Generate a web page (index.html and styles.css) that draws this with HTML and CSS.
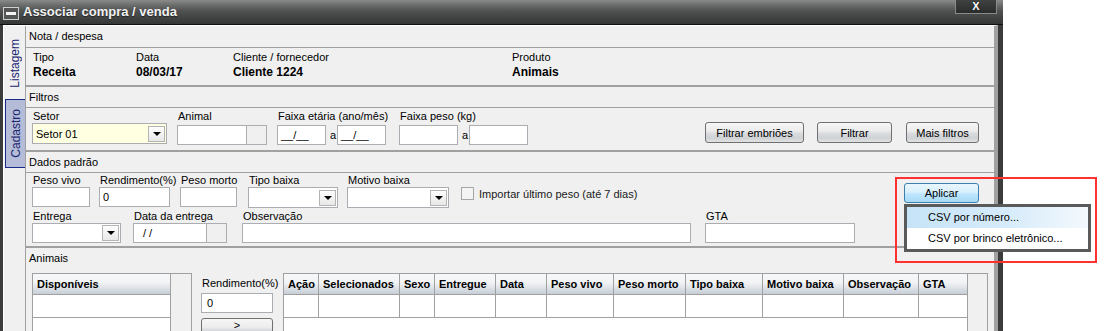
FILE: index.html
```html
<!DOCTYPE html>
<html lang="pt-BR">
<head>
    <meta charset="UTF-8">
    <title>Associar compra / venda</title>
    <link rel="stylesheet" href="styles.css">
</head>
<body>
    <div class="window">
        <div class="titlebar">
            <span class="sys-btn"><span></span></span>
            <span class="title">Associar compra / venda</span>
            <span class="close-btn">X</span>
        </div>
        <div class="frame">
            <div class="tabs">
                <div class="tab"><span>Listagem</span></div>
                <div class="tab active"><span>Cadastro</span></div>
            </div>
            <div class="main">
                <div class="sec-head first">Nota / despesa</div>
                <div class="sec-body nota">
                    <div class="info col-tipo"><div>Tipo</div><b>Receita</b></div>
                    <div class="info col-data"><div>Data</div><b>08/03/17</b></div>
                    <div class="info col-cliente"><div>Cliente / fornecedor</div><b>Cliente 1224</b></div>
                    <div class="info"><div>Produto</div><b>Animais</b></div>
                </div>

                <div class="sec-head">Filtros</div>
                <div class="sec-body filtros">
                    <div class="field w-135">
                        <div class="lbl">Setor</div>
                        <div class="sel yellow"><span>Setor 01</span><span class="dd"></span></div>
                    </div>
                    <div class="field ml-10">
                        <div class="lbl">Animal</div>
                        <div class="pair"><div class="inp w-70"></div><div class="inp off w-20"></div></div>
                    </div>
                    <div class="field ml-10">
                        <div class="lbl">Faixa etária (ano/mês)</div>
                        <div class="pair"><div class="inp w-49">__/__</div><span class="sep">a</span><div class="inp w-49">__/__</div></div>
                    </div>
                    <div class="field ml-11">
                        <div class="lbl">Faixa peso (kg)</div>
                        <div class="pair"><div class="inp w-59"></div><span class="sep">a</span><div class="inp w-59"></div></div>
                    </div>
                    <div class="filter-btns">
                        <div class="btn w-99">Filtrar embriões</div>
                        <div class="btn w-75">Filtrar</div>
                        <div class="btn w-73">Mais filtros</div>
                    </div>
                </div>

                <div class="sec-head">Dados padrão</div>
                <div class="sec-body dados">
                    <div class="row">
                        <div class="field w-58">
                            <div class="lbl">Peso vivo</div>
                            <div class="inp"></div>
                        </div>
                        <div class="field w-71 ml-9">
                            <div class="lbl">Rendimento(%)</div>
                            <div class="inp">0</div>
                        </div>
                        <div class="field w-57 ml-10">
                            <div class="lbl">Peso morto</div>
                            <div class="inp"></div>
                        </div>
                        <div class="field w-90 ml-11">
                            <div class="lbl">Tipo baixa</div>
                            <div class="sel"><span></span><span class="dd"></span></div>
                        </div>
                        <div class="field w-102 ml-9">
                            <div class="lbl">Motivo baixa</div>
                            <div class="sel"><span></span><span class="dd"></span></div>
                        </div>
                        <div class="check">
                            <span class="box"></span>
                            <span>Importar último peso (até 7 dias)</span>
                        </div>
                        <div class="aplicar-wrap">
                            <div class="btn aplicar">Aplicar</div>
                            <div class="menu">
                                <div class="menu-item hot">CSV por número...</div>
                                <div class="menu-item">CSV por brinco eletrônico...</div>
                            </div>
                            <div class="mark"></div>
                        </div>
                    </div>
                    <div class="row row2">
                        <div class="field w-89">
                            <div class="lbl">Entrega</div>
                            <div class="sel short"><span></span><span class="dd"></span></div>
                        </div>
                        <div class="field ml-12">
                            <div class="lbl">Data da entrega</div>
                            <div class="pair"><div class="inp w-74 date">/ /</div><div class="inp off w-20"></div></div>
                        </div>
                        <div class="field w-449 ml-15">
                            <div class="lbl">Observação</div>
                            <div class="inp"></div>
                        </div>
                        <div class="field w-150 ml-14">
                            <div class="lbl">GTA</div>
                            <div class="inp"></div>
                        </div>
                    </div>
                </div>

                <div class="sec-head plain">Animais</div>
                <div class="animais">
                    <div class="list">
                        <div class="list-main">
                            <div class="gh">Disponíveis</div>
                            <div class="gc"></div>
                        </div>
                        <div class="vscroll"></div>
                    </div>
                    <div class="rend">
                        <div class="lbl">Rendimento(%)</div>
                        <div class="inp">0</div>
                        <div class="btn move">&gt;</div>
                    </div>
                    <div class="grid-wrap">
                        <div class="grid">
                            <div class="gh">Ação</div>
                            <div class="gh">Selecionados</div>
                            <div class="gh">Sexo</div>
                            <div class="gh">Entregue</div>
                            <div class="gh">Data</div>
                            <div class="gh">Peso vivo</div>
                            <div class="gh">Peso morto</div>
                            <div class="gh">Tipo baixa</div>
                            <div class="gh">Motivo baixa</div>
                            <div class="gh">Observação</div>
                            <div class="gh">GTA</div>
                            <div class="gc"></div>
                            <div class="gc"></div>
                            <div class="gc"></div>
                            <div class="gc"></div>
                            <div class="gc"></div>
                            <div class="gc"></div>
                            <div class="gc"></div>
                            <div class="gc"></div>
                            <div class="gc"></div>
                            <div class="gc"></div>
                            <div class="gc"></div>
                        </div>
                        <div class="vscroll"></div>
                    </div>
                </div>
            </div>
        </div>
    </div>
</body>
</html>
```

FILE: styles.css
```css
* {
    box-sizing: border-box;
}
html, body {
    margin: 0;
    height: 100%;
    overflow: hidden;
}
body {
    background: #fff;
    font-family: "Liberation Sans", Arial, sans-serif;
    font-size: 11px;
    color: #000;
}

/* janela */
.window {
    width: 1003px;
    height: 331px;
    background: #3a3c3c;
    display: flex;
    flex-direction: column;
}
.titlebar {
    height: 25px;
    flex: none;
    display: flex;
    align-items: flex-start;
    border-bottom: 1px solid #101010;
    background: linear-gradient(#8a8a8a 0%, #6a6c6c 22%, #505252 45%, #434545 70%, #353737 100%);
}
.sys-btn {
    margin: 7px 0 0 3px;
    width: 16px;
    height: 13px;
    border: 1px solid #cfcfcf;
    background: #555;
    display: flex;
    align-items: center;
    justify-content: center;
}
.sys-btn span {
    width: 10px;
    height: 3px;
    background: #f4f4f4;
}
.title {
    margin: 4px 0 0 4px;
    font-size: 13px;
    line-height: 16px;
    font-weight: bold;
    color: #f2f2f2;
    text-shadow: 0 1px 1px #222;
}
.close-btn {
    margin: -1px 6px 0 auto;
    width: 42px;
    height: 15px;
    border: 1px solid #8a8a8a;
    background: linear-gradient(#404242, #2a2c2c);
    color: #fff;
    font-size: 11px;
    font-weight: bold;
    line-height: 13px;
    text-align: center;
    text-shadow: 0 0 1px #000;
}
.frame {
    flex: 1;
    min-height: 0;
    display: flex;
    margin: 0 5px 0 3px;
    border-top: 1px solid #fff;
    border-left: 1px solid #fff;
    border-right: 4px solid #a0a0a0;
    background: #f0f0f0;
}

/* abas verticais */
.tabs {
    width: 22px;
    flex: none;
    border-right: 1px solid #a0a0a0;
    padding-top: 2px;
}
.tab {
    height: 70px;
    display: flex;
    align-items: center;
    justify-content: center;
    font-size: 12px;
    color: #1a2670;
}
.tab span {
    writing-mode: vertical-rl;
    transform: rotate(180deg);
}
.tab.active {
    height: 69px;
    margin: 1px 0 0 1px;
    background: #b4bcd8;
    border: 1px solid #1a2a8a;
    border-right: none;
}

/* conteudo */
.main {
    width: 968px;
    flex: none;
    display: flex;
    flex-direction: column;
}
.sec-head {
    height: 21px;
    line-height: 20px;
    padding-left: 3px;
    border-bottom: 1px solid #a0a0a0;
    flex: none;
}
.sec-head.first {
    height: 22px;
    line-height: 21px;
}
.sec-head.plain {
    height: 20px;
    border-bottom: none;
}
.sec-body {
    flex: none;
    border-bottom: 2px solid #a0a0a0;
    padding-left: 6px;
}
.nota {
    height: 39px;
    padding-top: 2px;
    display: flex;
}
.info {
    padding-left: 1px;
    line-height: 15px;
}
.info b {
    display: block;
    font-size: 12px;
}
.col-tipo { width: 103px; }
.col-data { width: 97px; }
.col-cliente { width: 279px; }

.filtros {
    height: 44px;
    padding: 2px 15px 0 6px;
    display: flex;
    align-items: flex-start;
}
.dados {
    height: 75px;
    padding: 1px 15px 0 6px;
}
.row {
    display: flex;
    align-items: flex-start;
}
.row2 {
    margin-top: 2px;
}

.field {
    display: flex;
    flex-direction: column;
}
.lbl {
    height: 13px;
    line-height: 13px;
    padding-left: 1px;
    white-space: nowrap;
}
.pair {
    display: flex;
}
.inp {
    height: 20px;
    border: 1px solid #abadb3;
    background: #fff;
    padding-left: 3px;
    line-height: 18px;
    white-space: nowrap;
}
.filtros .inp {
    margin-top: 2px;
}
.inp.off {
    background: #f0f0f0;
    border-left: none;
}
.inp.date {
    padding-left: 9px;
}
.sep {
    width: 11px;
    margin-top: 2px;
    padding-left: 4px;
    line-height: 20px;
}
.sel {
    height: 21px;
    border: 1px solid #abadb3;
    background: #fff;
    display: flex;
    align-items: center;
    padding: 0 1px 0 3px;
}
.sel.short {
    height: 20px;
}
.sel.yellow {
    background: #ffffe1;
}
.sel span:first-child {
    flex: 1;
}
.dd {
    width: 17px;
    height: 16px;
    border: 1px solid #b4b4b4;
    background: linear-gradient(#fdfdfd, #e8e8e8);
    display: flex;
    align-items: center;
    justify-content: center;
}
.dd::after {
    content: "";
    border-left: 4px solid transparent;
    border-right: 4px solid transparent;
    border-top: 4px solid #000;
}

.btn {
    height: 21px;
    border: 1px solid #707070;
    border-radius: 3px;
    background: linear-gradient(#f6f6f6 0%, #ececec 42%, #d9dbde 55%, #cfd2d5 80%, #e2e2e2 100%);
    display: flex;
    align-items: center;
    justify-content: center;
    white-space: nowrap;
}
.filter-btns {
    margin: 12px 0 0 auto;
    display: flex;
    gap: 13px;
}
.filter-btns .btn:last-child {
    margin-left: 1px;
}

.check {
    margin: 13px 0 0 12px;
    display: flex;
    align-items: center;
    gap: 5px;
    color: #1a1a1a;
}
.check .box {
    width: 13px;
    height: 13px;
    border: 1px solid #a6a6a6;
    background: #f4f4f4;
}

.aplicar-wrap {
    position: relative;
    margin: 9px 0 0 auto;
}
.btn.aplicar {
    width: 75px;
    height: 20px;
    border-color: #3c7fb1;
    background: linear-gradient(#eaf6fd 0%, #d9f0fc 45%, #bee6fd 55%, #a7d9f5 100%);
}
.menu {
    position: absolute;
    left: 0;
    top: 21px;
    width: 187px;
    border: 3px solid #5a5a5a;
    background: #fff;
    z-index: 2;
}
.menu-item {
    height: 21px;
    line-height: 21px;
    padding-left: 21px;
    white-space: nowrap;
}
.menu-item.hot {
    background: linear-gradient(to right, #c6e3f7 0%, #d6ebfa 55%, #f4f9fd 100%);
}
.mark {
    position: absolute;
    left: -9px;
    top: -6px;
    width: 202px;
    height: 86px;
    border: 2px solid #ff3030;
    z-index: 3;
}

/* animais */
.animais {
    padding: 5px 6px 0;
    display: flex;
    align-items: flex-start;
}
.list {
    width: 160px;
    height: 70px;
    display: flex;
    border: 1px solid #a0a0a0;
    background: #fff;
}
.list-main {
    flex: 1;
    border-right: 1px solid #a0a0a0;
}
.vscroll {
    width: 20px;
    background: #f0f0f0;
}
.gh {
    height: 21px;
    line-height: 20px;
    padding-left: 4px;
    border-bottom: 1px solid #a0a0a0;
    font-weight: bold;
    white-space: nowrap;
    overflow: hidden;
    background: linear-gradient(#f7f8f9 0%, #f3f4f6 40%, #e2e6ea 65%, #c6cdd6 100%);
}
.gc {
    height: 23px;
    border-bottom: 1px solid #a0a0a0;
    background: #fff;
}
.rend {
    width: 72px;
    margin-left: 9px;
    padding-top: 3px;
}
.rend .lbl {
    height: 14px;
    line-height: 14px;
}
.rend .inp {
    margin-top: 3px;
    padding-left: 5px;
}
.btn.move {
    margin-top: 5px;
    height: 22px;
    align-items: flex-start;
    line-height: 11px;
    padding-top: 1px;
}
.grid-wrap {
    width: 705px;
    height: 70px;
    margin-left: 10px;
    display: flex;
    border: 1px solid #a0a0a0;
    background: #fff;
}
.grid {
    width: 683px;
    display: grid;
    grid-template-columns: 35px 81px 35px 61px 51px 67px 72px 77px 81px 75px 48px;
    align-content: start;
}
.grid .gh,
.grid .gc {
    border-right: 1px solid #a0a0a0;
}
.grid .gh:nth-child(11),
.grid .gc:nth-child(22) {
    border-right: none;
}
.grid-wrap .vscroll {
    width: 21px;
    border-left: 1px solid #a0a0a0;
}

/* larguras */
.w-20 { width: 20px; }
.w-49 { width: 49px; }
.w-57 { width: 57px; }
.w-58 { width: 58px; }
.w-59 { width: 59px; }
.w-70 { width: 70px; }
.w-71 { width: 71px; }
.w-73 { width: 73px; }
.w-74 { width: 74px; }
.w-75 { width: 75px; }
.w-89 { width: 89px; }
.w-90 { width: 90px; }
.w-99 { width: 99px; }
.w-102 { width: 102px; }
.w-135 { width: 135px; }
.w-150 { width: 150px; }
.w-449 { width: 449px; }
.ml-9 { margin-left: 9px; }
.ml-10 { margin-left: 10px; }
.ml-11 { margin-left: 11px; }
.ml-12 { margin-left: 12px; }
.ml-14 { margin-left: 14px; }
.ml-15 { margin-left: 15px; }
```
